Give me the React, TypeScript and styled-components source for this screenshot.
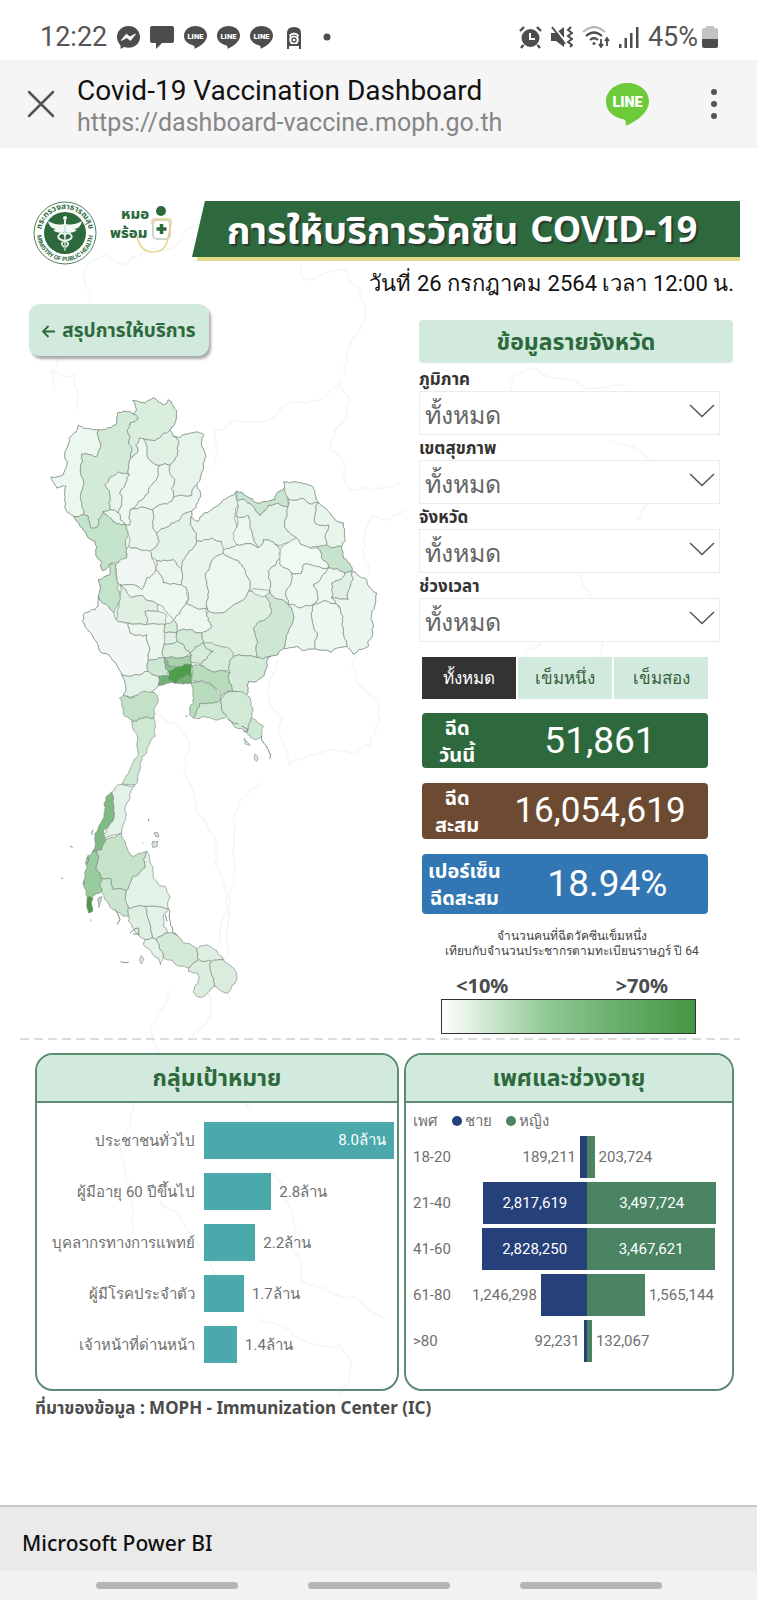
import React, { useState } from 'react';
import styled, { createGlobalStyle } from 'styled-components';

/* ---------- theme ---------- */

const color = {
  green: '#2d693c',
  mint: '#d2eadd',
  edge: '#5c8a72',
  teal: '#4ba8ab',
  navy: '#26407a',
  leaf: '#4a8462',
  brown: '#6d4b32',
  blue: '#3277b3',
  grey: '#6f6f6f',
};

const ui = `Roboto, sans-serif`;
const display = `'Noto Sans', 'Noto Sans Thai', sans-serif`;

const GlobalStyle = createGlobalStyle`
  *, *::before, *::after { box-sizing: border-box; }
  body { margin: 0; background: #fff; font-family: ${ui}; color: #222; }
  h1, h2, p, dl, dd, dt, ul { margin: 0; padding: 0; }
  ul { list-style: none; }
  button, select { font: inherit; border: 0; margin: 0; cursor: pointer; }
`;

/* ---------- map geometry ---------- */

type Pt = [number, number];

const parse = (s: string): Pt[] => s.trim().split(/\s+/).map(p => p.split(',').map(Number) as Pt);

const noise = (a: Pt, b: Pt) => {
  const v = Math.sin((a[0] + b[0]) * 12.9898 + (a[1] + b[1]) * 78.233) * 43758.5453;
  return (v - Math.floor(v)) * 2 - 1;
};

/* Splits an edge again and again, so that straight borders get a natural, ragged run. */
const split = (a: Pt, b: Pt, depth: number): Pt[] => {
  const swap = a[0] > b[0] || (a[0] === b[0] && a[1] > b[1]);
  const p = swap ? b : a;
  const q = swap ? a : b;
  const len = Math.hypot(q[0] - p[0], q[1] - p[1]);
  if (depth === 0 || len < 9) return [b];
  const k = noise(p, q) * 0.16;
  const m: Pt = [(p[0] + q[0]) / 2 - (q[1] - p[1]) * k, (p[1] + q[1]) / 2 + (q[0] - p[0]) * k];
  return [...split(a, m, depth - 1), ...split(m, b, depth - 1)];
};

const ragged = (s: string, closed = true) => {
  const pts = parse(s);
  const out: Pt[] = [pts[0]];
  for (let i = 1; i < pts.length; i++) out.push(...split(pts[i - 1], pts[i], 3));
  if (closed) out.push(...split(pts[pts.length - 1], pts[0], 3));
  return 'M' + out.map(p => `${Math.round(p[0])} ${Math.round(p[1])}`).join('L') + (closed ? 'Z' : '');
};

const northLand =
  '64,297 100,290 112,250 104,235 118,185 138,162 146,142 165,152 205,155 245,148 260,135 262,105 285,100 310,108 320,95 308,68 345,75 368,60 385,72 400,82 415,65 440,98 438,125 420,155 430,175 450,178 485,165 522,172 515,205 528,235 520,270 510,300 500,320 510,340 505,370 485,400 482,418 505,430 545,395 580,365 620,340 650,355 680,375 710,372 735,365 740,345 765,330 760,312 800,312 850,328 865,375 900,405 940,435 943,470 935,505 940,540 965,580 1010,605 1040,645 1035,680 1025,700 1030,740 1028,770 1015,805 985,815 970,828 950,805 855,812 800,805 760,812 720,835 685,905 655,910 650,950 610,940 485,915 460,918 435,915 385,922 360,945 280,955 275,890 265,870 210,820 165,745 160,710 205,685 205,655 205,605 240,590 245,555 218,578 200,535 195,490 150,445 132,415 105,385 108,325 80,330';

const north: [string, string][] = [
  ['#ebf7ef', '64,297 100,290 112,250 104,235 118,185 138,162 146,142 165,152 205,155 212,205 200,235 155,228 152,270 160,305 152,350 160,410 132,415 105,385 108,325 80,330'],
  ['#d3ead9', '205,155 245,148 260,135 262,105 285,100 310,108 325,120 300,135 292,155 302,240 298,290 265,282 225,320 240,355 240,395 220,400 205,425 200,450 182,450 175,415 160,410 152,350 160,305 152,270 155,228 200,235 212,205'],
  ['#daeede', '310,108 320,95 308,68 345,75 368,60 385,72 400,82 415,65 440,98 438,125 420,155 375,188 340,182 328,180 322,225 302,240 292,155 300,135 325,120'],
  ['#e0f1e4', '340,182 375,188 420,155 430,175 448,190 443,232 420,262 388,262 350,230'],
  ['#e6f4ea', '430,175 450,178 485,165 522,172 515,205 528,235 520,270 510,300 500,320 485,352 430,360 435,305 420,290 420,262 443,232 448,190'],
  ['#ebf6ee', '388,262 420,262 420,290 435,305 430,360 425,370 368,395 350,390 300,395 355,345 385,290'],
  ['#edf8f0', '328,180 340,182 350,230 388,262 385,290 355,345 300,395 300,440 285,440 265,405 275,375 268,345 290,300 298,290 302,240 322,225'],
  ['#e8f5eb', '298,290 290,300 268,345 275,375 265,405 240,395 240,355 225,320 265,282'],
  ['#eaf6ed', '240,395 265,405 285,440 240,420 220,400'],
  ['#c4e3cb', '132,415 160,410 175,415 182,450 200,450 205,425 220,400 240,420 285,440 295,470 290,540 245,555 218,578 200,535 195,490 150,445'],
  ['#ebf6ee', '500,320 510,340 505,370 485,400 440,430 380,465 368,395 425,370 430,360 485,352'],
  ['#e9f5ec', '300,395 350,390 368,395 380,465 388,490 360,520 295,505 295,470 285,440 300,440'],
  ['#e4f3e7', '485,400 482,418 480,440 500,465 500,490 470,530 455,575 430,545 380,548 365,540 360,520 388,490 380,465 440,430'],
  ['#f0f7f2', '295,505 360,520 365,540 378,575 335,635 270,620 258,560 290,540'],
  ['#ebf6ee', '380,548 430,545 455,575 455,620 400,615 378,575'],
  ['#eef7f0', '270,620 335,635 378,575 400,615 455,620 472,640 462,685 430,725 385,680 340,655 300,655'],
  ['#dfefe2', '270,620 300,655 340,655 385,680 385,700 345,700 350,740 295,735 258,725 270,650'],
  ['#c4e3cb', '245,555 258,560 262,610 270,650 252,705 205,655 205,605 240,590'],
  ['#f1f8f3', '205,655 252,705 258,725 295,735 300,765 350,770 355,850 355,880 275,890 265,870 210,820 165,745 160,710 205,685'],
  ['#e8f4ea', '345,700 385,700 410,715 405,740 350,740'],
  ['#ecf6ee', '295,735 350,740 405,740 402,800 405,840 355,850 350,770 300,765'],
  ['#e9f5ec', '500,490 545,480 575,490 580,525 540,560 530,620 535,700 530,690 470,675 472,640 455,620 455,575 470,530'],
  ['#edf7ef', '470,675 530,690 530,710 545,745 515,765 480,755 440,765 430,725 462,685'],
  ['#e8f5eb', '505,430 545,395 580,365 620,340 615,410 620,455 620,500 580,515 575,490 545,480 500,490 500,465 480,440 482,418'],
  ['#eef7f0', '620,415 655,412 660,450 685,510 620,500 610,465'],
  ['#e2f2e6', '620,365 670,385 690,412 715,382 775,385 765,450 800,480 770,495 735,500 700,485 685,510 660,450 655,412 620,415'],
  ['#c8e5cf', '620,340 650,355 680,375 710,372 735,365 740,345 765,330 775,345 775,385 715,382 690,412 670,385 620,365'],
  ['#e8f5eb', '765,330 760,312 800,312 850,328 865,375 840,378 820,362 775,365'],
  ['#eaf6ed', '775,365 820,362 840,378 865,375 855,435 895,440 890,500 840,510 800,480 765,450 775,385'],
  ['#e7f5ea', '865,375 900,405 940,435 943,470 935,505 890,500 895,440 855,435'],
  ['#c6e4cd', '860,508 890,500 935,505 940,540 965,580 945,585 895,570 875,540'],
  ['#f0faf3', '750,515 800,480 840,510 860,508 875,540 895,570 820,560 815,585 785,585 750,560'],
  ['#ebf6ee', '580,515 620,500 685,510 700,485 735,500 750,515 750,540 715,580 720,640 655,640 660,610 635,560 580,525'],
  ['#edf7ef', '580,525 635,560 660,610 655,640 600,690 535,700 530,620 540,560'],
  ['#eaf6ed', '750,540 750,560 785,585 775,680 720,640 715,580'],
  ['#eef8f1', '785,585 815,585 820,560 895,570 850,620 865,660 850,680 775,680'],
  ['#edf7f0', '895,570 945,585 905,615 905,660 930,690 890,670 850,680 865,660 850,620'],
  ['#dff0e3', '905,615 945,585 965,580 970,600 955,665 905,660'],
  ['#ebf6ee', '965,580 1010,605 1040,645 1035,680 1025,700 1030,740 1028,770 1015,805 985,815 970,828 950,805 935,740 930,690 905,660 955,665 970,600'],
  ['#eef8f1', '850,680 890,670 930,690 935,740 950,805 855,812 845,720'],
  ['#ebf6ee', '775,680 850,680 845,720 855,812 800,805 760,812 785,740 785,690'],
  ['#cde7d3', '720,640 775,680 785,690 785,740 760,812 720,835 680,838 670,750 725,700 705,655'],
  ['#dff0e3', '535,700 600,690 655,640 705,655 725,700 670,750 680,838 610,835 520,795 515,765 545,745 530,710'],
  ['#d3ead9', '440,765 480,755 515,765 520,795 480,825 440,790'],
  ['#d9eddd', '405,740 430,725 440,765 402,760'],
  ['#e2f1e5', '402,760 440,765 440,790 402,800'],
  ['#d9eddd', '402,800 440,790 480,825 470,835 405,840'],
  ['#d6ebdb', '480,825 520,795 550,820 510,860 485,855'],
  ['#d6ebdb', '520,795 610,825 610,835 600,885 550,882 510,860 550,820'],
  ['#d5ebda', '610,835 680,838 720,835 685,905 655,910 650,950 610,940 600,885'],
  ['#a6d1aa', '405,840 470,835 485,830 485,862 445,865 415,865'],
  ['#cde7d3', '355,850 405,840 415,880 410,895 385,895 355,880'],
  ['#8cc492', '405,840 415,865 440,868 415,880'],
  ['#4c9e4b', '440,868 485,862 485,895 450,900 435,915 415,905 415,880'],
  ['#6fb377', '385,895 415,893 415,905 435,915 385,922'],
  ['#6cb373', '435,915 450,900 485,895 485,915 460,918'],
  ['#b9dcbd', '485,862 510,860 550,882 600,885 610,940 575,955 520,910 485,905'],
  ['#e2f2e6', '275,890 355,880 385,895 385,922 360,945 280,955'],
];

const south: [string, string][] = [
  ['#c2e1c7', '268,180 280,172 350,160 375,165 385,185 372,240 320,250 285,235'],
  ['#cfe8d4', '305,250 320,250 372,240 375,295 355,325 350,345 330,375 325,405 315,442 275,438 300,395 325,350 320,320'],
  ['#e2f2e6', '270,440 315,442 300,480 285,520 278,560 275,585 220,600 230,580 250,545 248,490 245,462'],
  ['#7fba85', '245,462 248,490 250,545 220,580 228,605 215,635 188,640 205,570 225,520 230,475'],
  ['#98cc9d', '188,640 200,640 198,690 215,720 215,760 185,778 170,775 165,710 170,660'],
  ['#479a47', '172,778 188,780 188,820 175,825'],
  ['#c4e3c9', '228,605 275,585 295,640 310,655 350,640 345,690 310,715 290,758 250,755 245,725 215,720 198,690 200,640 215,635'],
  ['#cbe6d0', '215,720 245,725 250,755 290,758 295,810 295,835 260,820 225,785 215,760'],
  ['#e2f2e6', '350,640 358,655 370,720 405,745 415,812 345,805 295,810 290,758 310,715 345,690'],
  ['#dfefe2', '295,810 345,805 368,900 345,905 315,880 295,850'],
  ['#e3f2e6', '345,805 415,812 400,830 400,865 415,885 380,905 368,900'],
  ['#e4f2e7', '368,900 380,905 400,955 392,980 340,920 345,905'],
  ['#d3ead9', '380,905 415,885 435,885 465,915 500,932 505,965 475,990 430,970 400,955'],
  ['#dff0e3', '500,932 540,925 560,938 580,965 545,970 505,965'],
  ['#daedde', '505,965 545,970 545,1010 555,1045 510,1078 490,1060 505,1035 502,1005 475,1000 475,990'],
  ['#d9ecdd', '545,970 580,965 620,1005 615,1035 590,1065 555,1045 545,1010'],
  ['#b9dcbd', '485,135 515,128 575,180 510,195 490,240 478,230 490,195'],
  ['#cfe8d4', '575,180 590,235 545,242 490,240 510,195'],
  ['#d1e9d6', '575,180 610,160 650,170 668,210 665,240 655,260 650,285 590,235'],
  ['#cfe8d4', '665,240 700,265 695,295 680,305 650,285 655,260'],
  ['#d5e8d9', '368,610 384,610 382,625 368,628'],
  ['#d5e8d9', '372,585 384,585 386,597 376,595'],
  ['#dcebdf', '643,300 655,315 660,322 646,318'],
  ['#dcebdf', '675,348 683,358 680,370 672,362'],
  ['#dcebdf', '333,953 341,965 335,978 328,968'],
  ['#c9dccd', '205,780 214,775 210,795 206,808'],
];

const islets = [
  '695,295 705,320 715,335 720,362', '415,812 420,850 430,885 445,895', '595,245 605,252 625,258',
  '635,265 655,275 640,280', '255,815 270,845 262,860', '300,885 325,870 328,890 310,888',
  '272,970 296,972', '190,575 186,590', '120,625 128,628', '95,720 99,722', '355,543 357,550',
  '180,845 184,848', '466,232 472,236', '337,614 340,617', '405,830 412,850', '165,730 162,740', '175,650 170,680',
];

const coasts = [
  '55,390 60,350 75,330 90,300 85,270 105,255 125,265 165,250 185,230 200,225',
  '295,255 305,280 320,275 345,270 360,290 365,320 350,345 345,375',
  '50,372 75,375 80,410', '215,465 215,430 235,420 270,420 320,400 340,380 350,400 335,430 330,450 345,465 350,490 400,482',
  '405,510 390,520 372,515 365,545 370,590', '505,400 515,375 530,368 560,378 605,388 625,385',
  '278,660 282,740 290,765 330,750 370,745 380,720 378,700 355,680 355,650',
  '160,715 190,745 195,800 215,850 230,900 220,930 210,1010 190,1040',
  '262,782 240,800 235,870 228,920 225,960 230,1000', '170,990 150,1030 162,1065 135,1100 125,1170 130,1240',
  '200,1100 225,1085 250,1110', '270,1170 285,1200 292,1250 300,1280 330,1292 360,1300 385,1320',
  '160,1200 180,1215 200,1250 215,1275', '260,1320 290,1330 340,1345 350,1370 340,1395',
  '530,600 540,620 540,645 520,660', '610,440 640,450 650,480 637,520', '580,575 600,610 600,660',
];

/* ---------- shell ---------- */

const Page = styled.div`
  min-height: 100vh;
  display: flex;
  flex-direction: column;
`;

const StatusBar = styled.div`
  height: 60px;
  padding: 14px 39px 0 40px;
  display: flex;
  align-items: center;
  justify-content: space-between;
  font-size: 27px;
  line-height: 32px;
  color: #555;
`;

const StatusGroup = styled.div<{ $gap: number }>`
  display: flex;
  align-items: center;
  gap: ${p => p.$gap}px;
  svg { display: block; }
`;

const AppBar = styled.header`
  height: 88px;
  padding: 0 36px 0 27px;
  display: flex;
  align-items: center;
  background: #f5f5f5;
`;

const IconButton = styled.button`
  padding: 0;
  background: none;
  svg { display: block; }
`;

const PageInfo = styled.div`
  flex: 1;
  min-width: 0;
  padding: 4px 0 0 22px;
`;

const PageTitle = styled.p`
  font-size: 28px;
  line-height: 33px;
  color: #111;
  white-space: nowrap;
`;

const PageUrl = styled.p`
  font-size: 25px;
  line-height: 32px;
  color: #868686;
  white-space: nowrap;
`;

const LineBadge = styled.div`
  margin-right: 58px;
  svg { display: block; }
`;

const Report = styled.main`
  position: relative;
  flex: 1;
  padding: 53px 17px 64px 29px;
`;

const Backdrop = styled.svg`
  position: absolute;
  inset: 0;
  width: 100%;
  height: 100%;
  pointer-events: none;
`;

const Content = styled.div`
  position: relative;
`;

const Masthead = styled.div`
  display: flex;
  align-items: flex-start;
  padding-left: 2px;
  svg { display: block; flex: none; }
`;

const Brand = styled.div`
  margin: 3px 0 0 12px;
`;

const Banner = styled.div`
  flex: 1;
  margin-left: 17px;
  height: 60px;
  padding-bottom: 4px;
  background: linear-gradient(#e2d885, #e2d885) 5px 0 / 100% 60px no-repeat;
  clip-path: polygon(13px 0, 100% 0, 100% 100%, 5px 100%, 4px 56px, 0 56px);
`;

const BannerTitle = styled.h1`
  height: 56px;
  padding-right: 8px;
  display: flex;
  align-items: center;
  justify-content: center;
  background: ${color.green};
  color: #fff;
  font: 700 36px/56px ${display};
  white-space: nowrap;
  text-shadow: 2px 2px 1px #2b3a31;
`;

const ThaiTitle = styled.span`
  font-size: 38px;
  margin-right: 12px;
`;

const Updated = styled.p`
  padding-right: 6px;
  margin-top: 2px;
  text-align: right;
  font-size: 22px;
  line-height: 34px;
  color: #111;
`;

const Overview = styled.div`
  display: grid;
  grid-template-columns: 390fr 321fr;
  margin-top: 3px;
`;

const BackButton = styled.button`
  display: block;
  width: 180px;
  height: 52px;
  border-radius: 11px;
  background: ${color.mint};
  color: ${color.green};
  font: 700 19px/28px ${display};
  white-space: nowrap;
  box-shadow: 2px 3px 3px rgba(0, 0, 0, 0.35);
  svg { vertical-align: -1px; margin-right: 7px; }
`;

const MapBox = styled.div`
  margin-top: 22px;
  padding: 0 29px 0 1px;
  svg { display: block; width: 100%; height: auto; }
`;

const Panel = styled.section`
  padding: 16px 7px 0 0;
`;

const PanelTitle = styled.h2`
  height: 43px;
  border-radius: 4px;
  background: ${color.mint};
  color: ${color.green};
  text-align: center;
  font: 700 23px/43px ${display};
`;

const Filters = styled.div`
  margin-top: 4px;
  padding-right: 13px;
`;

const Field = styled.div`
  & + & { margin-top: 1px; }
`;

const FieldLabel = styled.label`
  display: block;
  font: 700 17px/24px ${display};
  color: #333;
`;

const SelectBox = styled.div`
  position: relative;
  svg { position: absolute; right: 5px; top: 13px; pointer-events: none; }
`;

const Select = styled.select`
  appearance: none;
  display: block;
  width: 100%;
  height: 44px;
  padding: 5px 36px 0 5px;
  border: 1px solid #ececec;
  border-radius: 0;
  background: #fff;
  color: #666;
  font: 400 25px/36px ${ui};
`;

const Narrow = styled.div`
  padding: 0 25px 0 3px;
`;

const Tabs = styled.div`
  display: grid;
  grid-template-columns: repeat(3, 1fr);
  gap: 2px;
  margin-top: 15px;
`;

const Tab = styled.button<{ $on: boolean }>`
  height: 42px;
  padding: 0;
  background: ${p => (p.$on ? '#333' : color.mint)};
  color: ${p => (p.$on ? '#fff' : '#35603f')};
  font-size: 17px;
  line-height: 28px;
`;

const Kpis = styled.dl`
  display: grid;
  gap: 15px;
  margin-top: 14px;
`;

const Kpi = styled.div<{ $bg: string; $h: number }>`
  height: ${p => p.$h}px;
  display: flex;
  align-items: center;
  border-radius: 4px;
  background: ${p => p.$bg};
  color: #fff;
`;

const KpiLabel = styled.dt`
  min-width: 70px;
  padding: 0 6px;
  text-align: center;
  font: 700 20px/27px ${display};
`;

const KpiValue = styled.dd<{ $size: number }>`
  flex: 1;
  text-align: center;
  font-size: ${p => p.$size}px;
  line-height: 44px;
`;

const Note = styled.p`
  margin: 15px -14px 0 0;
  text-align: center;
  font-size: 12px;
  line-height: 15px;
  color: #444;
  white-space: nowrap;
`;

const Scale = styled.div`
  margin: 14px 12px 0 19px;
`;

const ScaleLabels = styled.div`
  display: flex;
  justify-content: space-between;
  padding: 0 28px 0 15px;
  font: 700 20px/26px ${display};
  color: #4c4c4c;
`;

const ScaleBar = styled.div`
  height: 35px;
  border: 1px solid #333;
  background: linear-gradient(90deg, #fff, #8ec892 42%, #6db271 66%, #459745);
`;

const Rule = styled.hr`
  margin: 4px 0 0 -9px;
  border: 0;
  height: 2px;
  background: repeating-linear-gradient(90deg, #dcdcdc 0 9px, transparent 9px 14px);
`;

const Charts = styled.div`
  display: grid;
  grid-template-columns: 364fr 330fr;
  gap: 5px;
  margin: 13px 6px 0;
`;

const Card = styled.section`
  border: 2px solid ${color.edge};
  border-radius: 18px;
  overflow: hidden;
  min-height: 338px;
`;

const CardTitle = styled.h2`
  height: 48px;
  border-bottom: 2px solid ${color.edge};
  background: ${color.mint};
  color: ${color.green};
  text-align: center;
  font: 700 23px/45px ${display};
`;

const Groups = styled.ul`
  display: grid;
  gap: 14px;
  padding: 19px 3px 0 0;
`;

const GroupRow = styled.li`
  display: grid;
  grid-template-columns: 167fr 191fr;
  align-items: center;
`;

const GroupName = styled.span`
  padding-right: 9px;
  text-align: right;
  font-size: 15px;
  line-height: 26px;
  color: ${color.grey};
  white-space: nowrap;
`;

const GroupTrack = styled.div`
  display: flex;
  align-items: center;
  gap: 8px;
`;

const GroupBar = styled.div`
  height: 37px;
  padding-right: 8px;
  background: ${color.teal};
  color: #fff;
  text-align: right;
  font-size: 15px;
  line-height: 37px;
`;

const GroupValue = styled.span`
  font-size: 15px;
  line-height: 26px;
  color: ${color.grey};
`;

const Legend = styled.div`
  display: flex;
  align-items: center;
  padding: 5px 0 0 7px;
  font-size: 15px;
  line-height: 26px;
  color: ${color.grey};
`;

const LegendItem = styled.span<{ $c: string }>`
  display: flex;
  align-items: center;
  gap: 3px;
  margin-left: 14px;
  &::before {
    content: '';
    width: 10px;
    height: 10px;
    border-radius: 50%;
    background: ${p => p.$c};
  }
`;

const Pyramid = styled.ul`
  display: grid;
  gap: 4px;
  padding-left: 7px;
  margin-top: 2px;
`;

const AgeRow = styled.li`
  display: grid;
  grid-template-columns: 57px 117fr 145fr;
  align-items: center;
  font-size: 15px;
  line-height: 20px;
  color: ${color.grey};
`;

const Side = styled.div<{ $left?: boolean }>`
  display: flex;
  flex-direction: ${p => (p.$left ? 'row-reverse' : 'row')};
  align-items: center;
  gap: 4px;
`;

const AgeBar = styled.div<{ $c: string }>`
  flex: none;
  height: 42px;
  background: ${p => p.$c};
  color: #fff;
  text-align: center;
  line-height: 42px;
`;

const Source = styled.p`
  margin: 3px 0 0 6px;
  font: 700 17px/28px ${display};
  color: #4c4c4c;
`;

const Footer = styled.footer`
  height: 66px;
  padding: 7px 22px 0;
  display: flex;
  align-items: center;
  border-top: 2px solid #c9c9c9;
  background: #eaeaea;
  color: #111;
  font: 500 21px/30px 'Noto Sans', sans-serif;
`;

const NavBar = styled.div`
  height: 29px;
  display: flex;
  align-items: center;
  justify-content: center;
  gap: 70px;
  background: #f2f2f2;
`;

const NavPill = styled.span`
  width: 142px;
  height: 7px;
  border-radius: 4px;
  background: #b5b5b5;
`;

/* ---------- icons ---------- */

const LineIcon = ({ size, fill, text }: { size: number; fill: string; text: string }) => (
  <svg width={size} height={size} viewBox="0 0 42 42" role="img" aria-label="LINE">
    <path d="M21 0C9 0 0 8 0 18c0 9 7 15.500 17 17.500 2 .5 2.500 1.500 2.200 4-.1 1.300.3 2.300 1.500 1.700C27 38.500 42 30 42 18 42 8 33 0 21 0z" fill={fill} />
    <text x="21" y="23" textAnchor="middle" fontFamily="Roboto, sans-serif" fontWeight="900" fontSize="14" fill={text}>LINE</text>
  </svg>
);

const Messenger = () => (
  <svg width="23" height="23" viewBox="0 0 24 24">
    <path d="M12 0C5.200 0 0 5 0 11.600c0 3.500 1.400 6.400 3.700 8.500V24l3.600-2c1.500.5 3 .8 4.700.8 6.800 0 12-4.800 12-11.300S18.800 0 12 0z" fill="#4d4d4d" />
    <path d="M4.500 15l5.300-6.500 3.600 3 5.800-3-5.200 6.500-3.700-3z" fill="#fff" stroke="#fff" strokeWidth="1" strokeLinejoin="round" />
  </svg>
);

const Bubble = () => (
  <svg width="24" height="23" viewBox="0 0 24 23">
    <path d="M2 0h20a2 2 0 0 1 2 2v13a2 2 0 0 1-2 2H12l-6 6v-6H2a2 2 0 0 1-2-2V2a2 2 0 0 1 2-2z" fill="#4d4d4d" />
  </svg>
);

const Locker = () => (
  <svg width="22" height="23" viewBox="1 0 22 23">
    <path d="M5 7q0-6 7-6t7 6v16h-2v-3H7v3H5z" fill="#4d4d4d" />
    <path d="M7 9q5-5 10 0l-1 2q2 3-1 7H9q-3-4-1-7z" fill="#fff" />
    <path d="M9 10q3-2 6 0" fill="none" stroke="#4d4d4d" />
    <circle cx="12" cy="14" r="2" fill="none" stroke="#4d4d4d" strokeWidth="1.300" />
  </svg>
);

const Alarm = () => (
  <svg width="23" height="23" viewBox="0 0 23 23" fill="none" stroke="#4d4d4d">
    <circle cx="11.500" cy="12" r="9" fill="#4d4d4d" stroke="none" />
    <path d="M1 5l4-4M22 5l-4-4M4.500 19L2 22M18.500 19l2.500 3" strokeWidth="2.400" />
    <path d="M11 7v6h5" stroke="#fff" strokeWidth="2" />
  </svg>
);

const Muted = () => (
  <svg width="22" height="22" viewBox="0 0 22 22" fill="none" stroke="#4d4d4d">
    <path d="M0 7h5l8-6v20l-8-6H0z" fill="#4d4d4d" stroke="none" />
    <path d="M2 0l13 16" stroke="#fff" strokeWidth="2" />
    <path d="M1 1l13 17" strokeWidth="2" />
    <path d="M20 1l-3 3 4 3-4 3 4 3-4 3 4 3-2 2" strokeWidth="2" />
  </svg>
);

const Wifi = () => (
  <svg width="28" height="22" viewBox="0 0 28 22" fill="none" stroke="#4d4d4d" strokeWidth="2.200">
    <path d="M1 6Q12-4 23 6" stroke="#b5b5b5" />
    <path d="M4 10q8-7 16 0M8 14q4-3.500 8 0" />
    <circle cx="12" cy="17.500" r="1.500" fill="#4d4d4d" stroke="none" />
    <path d="M19 13v8m-2-3l2 3 2-3M25 20v-8m-2 3l2-3 2 3" strokeWidth="1.800" />
  </svg>
);

const Signal = () => (
  <svg width="20" height="21" viewBox="0 0 20 21" fill="#4d4d4d">
    <path d="M0 17h2.500v4H0zM5.500 11H8v10H5.500zM11 6h2.500v15H11zM17 0h2.500v21H17z" />
  </svg>
);

const Battery = () => (
  <svg width="16" height="22" viewBox="0 0 16 22">
    <path d="M4 0h8v2h2a2 2 0 0 1 2 2v9H0V4a2 2 0 0 1 2-2h2z" fill="#c2c2c2" />
    <path d="M0 13h16v7a2 2 0 0 1-2 2H2a2 2 0 0 1-2-2z" fill="#4d4d4d" />
  </svg>
);

const Seal = () => (
  <svg width="66" height="64" viewBox="0 1 66 64" role="img" aria-label="กระทรวงสาธารณสุข">
    <defs>
      <path id="sealTop" d="M10 33a24 24 0 0 1 48 0" />
      <path id="sealBottom" d="M6 33a28 28 0 0 0 56 0" />
    </defs>
    <circle cx="34" cy="33" r="31" fill="#fff" stroke="#4f7f60" />
    <circle cx="34" cy="33" r="21" fill={color.green} />
    <text fontFamily="'Noto Sans Thai', sans-serif" fontSize="8" fontWeight="700" fill={color.green}>
      <textPath href="#sealTop" startOffset="50%" textAnchor="middle">กระทรวงสาธารณสุข</textPath>
    </text>
    <text fontFamily="Roboto, sans-serif" fontSize="6" fontWeight="700" fill={color.green}>
      <textPath href="#sealBottom" startOffset="50%" textAnchor="middle">MINISTRY OF PUBLIC HEALTH</textPath>
    </text>
    <g fill="#f1f8f3">
      <circle cx="34" cy="18" r="2" />
      <path d="M33 20h2l-.5 31h-1z" />
      <path d="M33 24Q26 26 17 21q1 7 8 8l-3 1q4 4 11 2zM35 24q7 2 16-3-1 7-8 8l3 1q-4 4-11 2z" />
    </g>
    <path d="M28 35q-3 4 6 6 6 2 1 6M40 35q3 4-6 6-6 2-1 6M28 35q3-4 6 0 3-4 6 0" fill="none" stroke="#f1f8f3" strokeWidth="1.800" />
  </svg>
);

const MorPrompt = () => (
  <svg width="66" height="52" viewBox="0 0 66 52" role="img" aria-label="หมอพร้อม">
    <g fontFamily="'Noto Sans Thai UI', 'Noto Sans Thai', sans-serif" fontWeight="800" fill={color.green}>
      <text x="12" y="15" fontSize="15">หมอ</text>
      <text x="1" y="34" fontSize="15">พร้อม</text>
    </g>
    <circle cx="52" cy="7" r="5" fill={color.green} />
    <rect x="44" y="16" width="17" height="19" rx="4" fill="#fff" stroke="#cfd6d0" strokeWidth="2" />
    <path d="M52.500 20v10M47.500 25h10" stroke={color.green} strokeWidth="3.500" />
    <path d="M43 20v-3q0-2 2-2h15q3 0 2 4l-3 15q-2 14-15 14-13 0-16-16" fill="none" stroke="#e9d68c" strokeWidth="1.500" />
  </svg>
);

const Chevron = () => (
  <svg width="26" height="14" viewBox="0 0 26 14" fill="none" stroke="#555" strokeWidth="1.500">
    <path d="M1 1l12 11.500L25 1" />
  </svg>
);

/* ---------- data ---------- */

const filters = ['ภูมิภาค', 'เขตสุขภาพ', 'จังหวัด', 'ช่วงเวลา'];
const doses = ['ทั้งหมด', 'เข็มหนึ่ง', 'เข็มสอง'];

const kpis = [
  { label: ['ฉีด', 'วันนี้'], value: '51,861', bg: color.green, h: 55, size: 37 },
  { label: ['ฉีด', 'สะสม'], value: '16,054,619', bg: color.brown, h: 56, size: 35 },
  { label: ['เปอร์เซ็น', 'ฉีดสะสม'], value: '18.94%', bg: color.blue, h: 60, size: 37 },
];

const groups = [
  { name: 'ประชาชนทั่วไป', value: 8.0, share: 100 },
  { name: 'ผู้มีอายุ 60 ปีขึ้นไป', value: 2.8, share: 35.6 },
  { name: 'บุคลากรทางการแพทย์', value: 2.2, share: 27.2 },
  { name: 'ผู้มีโรคประจำตัว', value: 1.7, share: 21.2 },
  { name: 'เจ้าหน้าที่ด่านหน้า', value: 1.4, share: 17.6 },
];

const ages = [
  { age: '18-20', male: 189211, female: 203724 },
  { age: '21-40', male: 2817619, female: 3497724 },
  { age: '41-60', male: 2828250, female: 3467621 },
  { age: '61-80', male: 1246298, female: 1565144 },
  { age: '>80', male: 92231, female: 132067 },
];

const AgeSide = ({ n, max, c, left }: { n: number; max: number; c: string; left?: boolean }) => {
  const inside = n > 2000000;
  const text = n.toLocaleString('en-US');
  return (
    <Side $left={left}>
      <AgeBar $c={c} style={{ width: `${(n / max) * 100}%` }}>{inside && text}</AgeBar>
      {!inside && <span>{text}</span>}
    </Side>
  );
};

const ThailandMap = () => (
  <svg viewBox="0 0 1080 1896" role="img" aria-label="Thailand" stroke="#7f8a82" strokeWidth="2" strokeLinejoin="round">
    <path d={ragged(northLand)} fill="#ebf6ee" />
    {north.map(([fill, pts], i) => <path key={i} d={ragged(pts)} fill={fill} />)}
    <g transform="translate(0 780)">
      {south.map(([fill, pts], i) => <path key={i} d={ragged(pts)} fill={fill} />)}
      {islets.map((pts, i) => <path key={i} d={ragged(pts, false)} fill="none" strokeWidth="3" />)}
    </g>
  </svg>
);

export default function App() {
  const [dose, setDose] = useState(0);
  return (
    <Page>
      <GlobalStyle />
      <StatusBar>
        <StatusGroup $gap={10}>
          <span>12:22</span>
          <Messenger />
          <Bubble />
          {[0, 1, 2].map(i => <LineIcon key={i} size={23} fill="#4d4d4d" text="#fff" />)}
          <Locker />
          <svg width="24" height="8" viewBox="0 0 24 8"><circle cx="12" cy="4" r="3.500" fill="#4d4d4d" /></svg>
        </StatusGroup>
        <StatusGroup $gap={9}>
          <Alarm />
          <Muted />
          <Wifi />
          <Signal />
          <StatusGroup $gap={4}>
            <span>45%</span>
            <Battery />
          </StatusGroup>
        </StatusGroup>
      </StatusBar>

      <AppBar>
        <IconButton aria-label="Close">
          <svg width="28" height="28" viewBox="0 0 28 28" stroke="#555" strokeWidth="2.500" strokeLinecap="round">
            <path d="M2 2l24 24M26 2L2 26" />
          </svg>
        </IconButton>
        <PageInfo>
          <PageTitle>Covid-19 Vaccination Dashboard</PageTitle>
          <PageUrl>https://dashboard-vaccine.moph.go.th</PageUrl>
        </PageInfo>
        <LineBadge><LineIcon size={43} fill="#6dcb3a" text="#fff" /></LineBadge>
        <IconButton aria-label="More">
          <svg width="14" height="32" viewBox="0 0 14 32" fill="#555">
            <circle cx="7" cy="4" r="3" /><circle cx="7" cy="16" r="3" /><circle cx="7" cy="28" r="3" />
          </svg>
        </IconButton>
      </AppBar>

      <Report>
        <Backdrop viewBox="0 148 757 1358" preserveAspectRatio="xMidYMin slice" fill="none" stroke="#f3f9f8" strokeWidth="2">
          {coasts.map((c, i) => <path key={i} d={ragged(c, false)} />)}
        </Backdrop>
        <Content>
          <Masthead>
            <Seal />
            <Brand><MorPrompt /></Brand>
            <Banner>
              <BannerTitle><ThaiTitle>การให้บริการวัคซีน</ThaiTitle>COVID-19</BannerTitle>
            </Banner>
          </Masthead>
          <Updated>วันที่ 26 กรกฎาคม 2564 เวลา 12:00 น.</Updated>

          <Overview>
            <div>
              <BackButton>
                <svg width="13" height="13" viewBox="0 0 13 13" fill="none" stroke={color.green} strokeWidth="1.800">
                  <path d="M13 6.500H1M6.500 1L1 6.500 6.500 12" />
                </svg>
                สรุปการให้บริการ
              </BackButton>
              <MapBox><ThailandMap /></MapBox>
            </div>
            <Panel>
              <PanelTitle>ข้อมูลรายจังหวัด</PanelTitle>
              <Filters>
                {filters.map((f, i) => (
                  <Field key={f}>
                    <FieldLabel htmlFor={`filter-${i}`}>{f}</FieldLabel>
                    <SelectBox>
                      <Select id={`filter-${i}`}><option>ทั้งหมด</option></Select>
                      <Chevron />
                    </SelectBox>
                  </Field>
                ))}
              </Filters>
              <Narrow>
                <Tabs>
                  {doses.map((d, i) => (
                    <Tab key={d} $on={dose === i} aria-pressed={dose === i} onClick={() => setDose(i)}>{d}</Tab>
                  ))}
                </Tabs>
                <Kpis>
                  {kpis.map(k => (
                    <Kpi key={k.value} $bg={k.bg} $h={k.h}>
                      <KpiLabel>{k.label[0]}<br />{k.label[1]}</KpiLabel>
                      <KpiValue $size={k.size}>{k.value}</KpiValue>
                    </Kpi>
                  ))}
                </Kpis>
                <Note>จำนวนคนที่ฉีดวัคซีนเข็มหนึ่ง<br />เทียบกับจำนวนประชากรตามทะเบียนราษฎร์ ปี 64</Note>
                <Scale>
                  <ScaleLabels><span>&lt;10%</span><span>&gt;70%</span></ScaleLabels>
                  <ScaleBar />
                </Scale>
              </Narrow>
            </Panel>
          </Overview>

          <Rule />

          <Charts>
            <Card>
              <CardTitle>กลุ่มเป้าหมาย</CardTitle>
              <Groups>
                {groups.map(g => {
                  const text = `${g.value.toFixed(1)}ล้าน`;
                  const inside = g.share > 80;
                  return (
                    <GroupRow key={g.name}>
                      <GroupName>{g.name}</GroupName>
                      <GroupTrack>
                        <GroupBar style={{ width: `${g.share}%` }}>{inside && text}</GroupBar>
                        {!inside && <GroupValue>{text}</GroupValue>}
                      </GroupTrack>
                    </GroupRow>
                  );
                })}
              </Groups>
            </Card>
            <Card>
              <CardTitle>เพศและช่วงอายุ</CardTitle>
              <Legend>
                เพศ
                <LegendItem $c={color.navy}>ชาย</LegendItem>
                <LegendItem $c={color.leaf}>หญิง</LegendItem>
              </Legend>
              <Pyramid>
                {ages.map(a => (
                  <AgeRow key={a.age}>
                    <span>{a.age}</span>
                    <AgeSide left n={a.male} max={3160000} c={color.navy} />
                    <AgeSide n={a.female} max={3920000} c={color.leaf} />
                  </AgeRow>
                ))}
              </Pyramid>
            </Card>
          </Charts>
          <Source>ที่มาของข้อมูล : MOPH - Immunization Center (IC)</Source>
        </Content>
      </Report>

      <Footer>Microsoft Power BI</Footer>
      <NavBar><NavPill /><NavPill /><NavPill /></NavBar>
    </Page>
  );
}
